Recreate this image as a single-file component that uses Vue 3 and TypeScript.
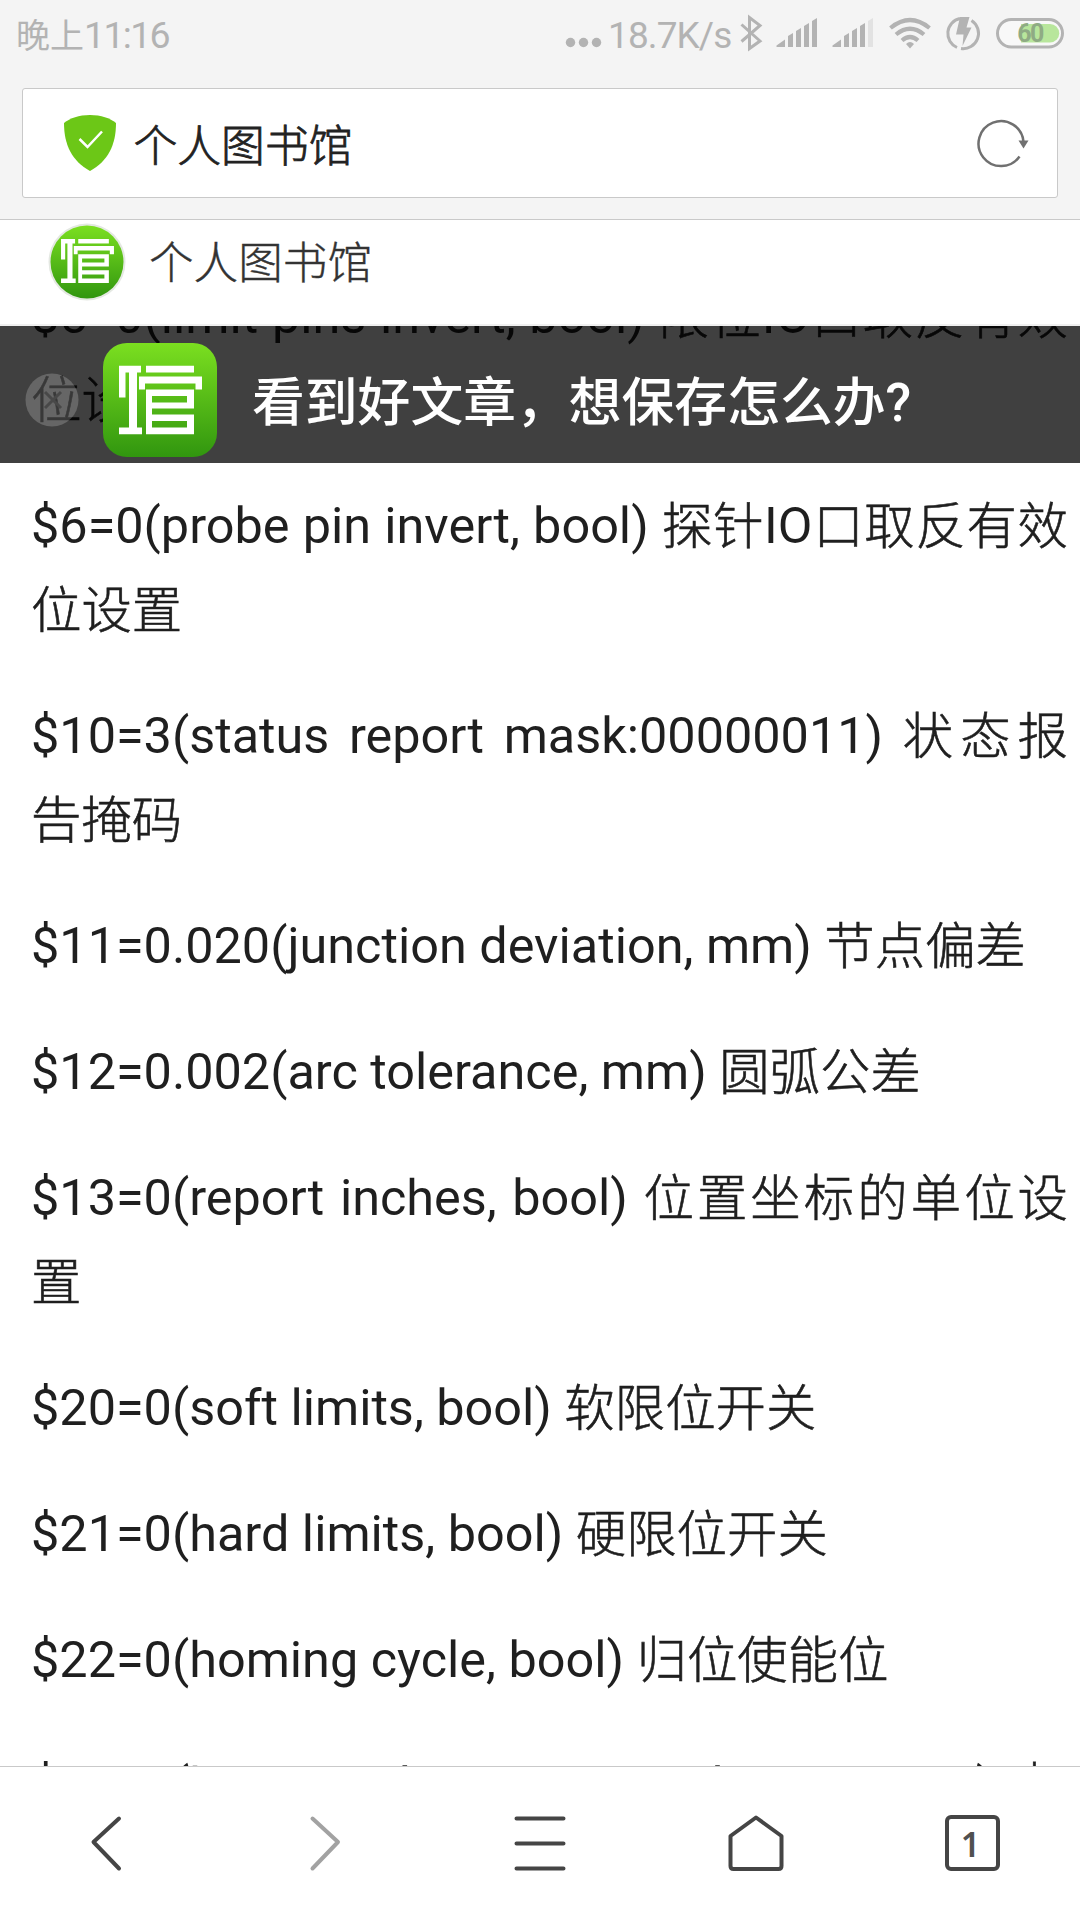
<script setup lang="ts">
interface Run {
  text: string
  han: boolean
}

const lines: string[] = [
  '$5=0(limit pins invert, bool) 限位IO口取反有效位设置',
  '$6=0(probe pin invert, bool) 探针IO口取反有效位设置',
  '$10=3(status report mask:00000011) 状态报告掩码',
  '$11=0.020(junction deviation, mm) 节点偏差',
  '$12=0.002(arc tolerance, mm) 圆弧公差',
  '$13=0(report inches, bool) 位置坐标的单位设置',
  '$20=0(soft limits, bool) 软限位开关',
  '$21=0(hard limits, bool) 硬限位开关',
  '$22=0(homing cycle, bool) 归位使能位',
  '$23=0(homing dir invert mask:00000000) 归位方向',
]

// Han characters are set in a lighter weight than the Latin text around them.
const paragraphs: Run[][] = lines.map((line) =>
  line
    .split(/([\u4e00-\u9fff]+)/)
    .filter((text) => text.length > 0)
    .map((text) => ({ text, han: /[\u4e00-\u9fff]/.test(text) })),
)
</script>

<template>
  <div class="screen">
    <header class="top">
      <div class="status">
        <span class="clock"><span class="clock-part">晚上</span>11:16</span>
        <span class="speed">18.7K/s</span>
        <svg class="status-icons" width="1080" height="70" viewBox="0 0 1080 70">
          <g fill="#b3b3b3">
            <circle cx="570.5" cy="42.5" r="4.7" />
            <circle cx="583.5" cy="42.5" r="4.7" />
            <circle cx="596.5" cy="42.5" r="4.7" />
            <path d="M776.500 47V45.500L785 39.500V47ZM788 36L793 33V47H788ZM796 31L801 28V47H796ZM804 26L809 23V47H804ZM812 21L817 18V47H812Z" />
            <path d="M832.500 47V45.500L841 39.500V47ZM844 36L849 33V47H844ZM852 31L857 28V47H852ZM860 26L865 23V47H860Z" />
            <path d="M868 21L873 18V47H868Z" fill="#e2e2e2" />
            <path d="M910 48.500L906 44Q910 40 914 44Z" />
            <path d="M960 17H969.500L966.500 27.500H971.500L962.500 46L963.500 34.500H956Z" />
          </g>
          <g fill="none" stroke="#b3b3b3" stroke-width="3">
            <path d="M741.500 24.500L760 41L749.500 48.500V17.500L760 25.500L741.500 41.500" />
            <path d="M890.500 28Q910 12 929.500 28M896 34.500Q910 23 924 34.500M902 40.500Q910 33.500 918 40.500" stroke-width="4.200" />
            <path d="M957 47.500A15.300 15.300 0 0 1 960 18.500M971.500 20.500A15.300 15.300 0 0 1 961 48.500" />
          </g>
          <rect x="997.500" y="19.500" width="65" height="27.500" rx="13.700" fill="#f8f8f8" stroke="#b3b3b3" stroke-width="3" />
          <path d="M1021 24H1050A9.200 9.200 0 0 1 1050 42.500H1021Z" fill="#b8e69c" />
        </svg>
        <span class="battery">60</span>
      </div>
      <div class="address">
        <svg class="shield" width="52" height="56" viewBox="0 0 52 56">
          <path d="M26 0C37 0 46 3 52 8C52 30 44 46 26 56C8 46 0 30 0 8C6 3 15 0 26 0Z" fill="#6cc717" />
          <path d="M15.500 24L23.500 32L38 16.500" fill="none" stroke="#fff" stroke-width="2.500" />
        </svg>
        <span class="address-title">个人图书馆</span>
        <svg class="reload" width="56" height="56" viewBox="0 0 56 56">
          <path d="M46.500 40.500A22.500 22.500 0 1 1 50.500 26" fill="none" stroke="#707070" stroke-width="2.500" />
          <path d="M45.500 24.500H55.500L50.500 32.500Z" fill="#707070" />
        </svg>
      </div>
    </header>

    <svg width="0" height="0" class="defs">
      <defs>
        <linearGradient id="green" x1="0" y1="0" x2="0" y2="1">
          <stop offset="0" stop-color="#7bdf20" />
          <stop offset="1" stop-color="#31960f" />
        </linearGradient>
        <symbol id="mark" viewBox="0 0 83 69">
          <g fill="#fff" fill-rule="evenodd">
            <path d="M0 0H22V7H18V62H23V69H0V62H10V7H6.500V32H0Z" />
            <path d="M27 0H75V7H27Z" />
            <path d="M20 11H83V24H76.500V18H26V24H20Z" />
            <path d="M27 24H75V43H33V49H75V69H27ZM33 30.500V37H68V30.500ZM33 55.500V62H68V55.500Z" />
          </g>
        </symbol>
      </defs>
    </svg>

    <div class="site">
      <svg class="site-logo" width="78" height="78" viewBox="0 0 78 78">
        <circle cx="39" cy="39" r="38.500" fill="#e4e8e2" />
        <circle cx="39" cy="39" r="36.500" fill="url(#green)" />
        <use href="#mark" x="13" y="16" width="53" height="44" />
      </svg>
      <span class="site-title">个人图书馆</span>
    </div>

    <main class="article">
      <div class="banner">
        <svg class="close" width="54" height="54" viewBox="0 0 54 54">
          <circle cx="27" cy="27" r="26.500" fill="#fff" fill-opacity="0.200" />
          <path d="M20 19L36 35M36 19L20 35" stroke="#484848" stroke-width="3" />
        </svg>
        <svg class="app-logo" width="114" height="114" viewBox="0 0 114 114">
          <rect width="114" height="114" rx="24" fill="url(#green)" />
          <use href="#mark" x="16" y="22.500" width="83" height="69" />
        </svg>
        <span class="slogan">看到好文章，想保存怎么办?</span>
      </div>
      <div class="copy">
        <p v-for="(runs, i) in paragraphs" :key="i"><span v-for="(run, j) in runs" :key="j" :class="{ han: run.han }">{{ run.text }}</span></p>
      </div>
    </main>

    <nav class="nav">
      <div class="nav-item">
        <svg width="60" height="60" viewBox="0 0 60 60">
          <path d="M41 5.500L15.500 29L41 55.500" stroke="#454545" />
        </svg>
      </div>
      <div class="nav-item">
        <svg width="60" height="60" viewBox="0 0 60 60">
          <path d="M18.500 5.500L44 29L18.500 55.500" stroke="#a2a2a2" />
        </svg>
      </div>
      <div class="nav-item">
        <svg width="60" height="60" viewBox="0 0 60 60">
          <path d="M6.500 5.500H53.500M6.500 30.500H53.500M6.500 55.500H53.500" stroke="#454545" />
        </svg>
      </div>
      <div class="nav-item">
        <svg width="60" height="60" viewBox="0 0 60 60">
          <path d="M30 4.500L55.500 23V53Q55.500 56 52.500 56H7.500Q4.500 56 4.500 53V23Z" stroke="#454545" />
        </svg>
      </div>
      <div class="nav-item"><span class="tabs">1</span></div>
    </nav>
  </div>
</template>

<style>
body {
  margin: 0;
}
</style>

<style scoped>
.screen {
  width: 1080px;
  height: 1920px;
  overflow: hidden;
  display: flex;
  flex-direction: column;
  background: #fff;
  color: #1f1f1f;
  font-family: Roboto, "Noto Sans CJK SC", sans-serif;
}
.top {
  box-sizing: border-box;
  height: 220px;
  flex: none;
  background: #f4f4f4;
  border-bottom: 1px solid #c9c9c9;
}
.status {
  position: relative;
  height: 88px;
  color: #b3b3b3;
}
.status-icons {
  position: absolute;
  left: 0;
  top: 0;
}
.clock {
  position: absolute;
  left: 16px;
  top: 10px;
  font-size: 37.5px;
  letter-spacing: -1.7px;
  line-height: 50px;
  white-space: nowrap;
}
.clock-part {
  font-size: 34px;
  letter-spacing: 0;
}
.speed {
  position: absolute;
  left: 608px;
  top: 11px;
  font-size: 37px;
  letter-spacing: -0.9px;
  line-height: 50px;
}
.battery {
  position: absolute;
  left: 1015px;
  width: 30px;
  top: 18px;
  font-size: 25px;
  font-weight: 700;
  letter-spacing: -1.5px;
  line-height: 31px;
  text-align: center;
  color: #8fab84;
}
.address {
  box-sizing: border-box;
  margin: 0 22px;
  height: 110px;
  border: 1px solid #c9c9c9;
  border-radius: 3px;
  background: #fff;
  display: flex;
  align-items: center;
  padding: 0 28px 0 41px;
}
.reload {
  margin-top: 1px;
}
.address-title {
  margin-left: 17.5px;
  padding-top: 7px;
  flex: 1;
  font-size: 43.8px;
  font-weight: 300;
  -webkit-text-stroke: 0.8px #222;
  line-height: 60px;
  color: #222;
}
.site {
  height: 106px;
  flex: none;
  box-sizing: border-box;
  display: flex;
  padding: 3px 0 0 48px;
  border-bottom: 2px solid #f0f0f0;
}
.site-title {
  margin-left: 23px;
  padding-top: 1.5px;
  font-size: 44.6px;
  font-weight: 300;
  -webkit-text-stroke: 0.4px #333;
  line-height: 78px;
  color: #333;
}
.defs {
  position: absolute;
}
.article {
  position: relative;
  flex: 1;
  min-height: 0;
  overflow: hidden;
}
.banner {
  position: absolute;
  z-index: 1;
  inset: 0 0 auto 0;
  height: 137px;
  box-sizing: border-box;
  background: rgba(0, 0, 0, 0.75);
  display: flex;
  align-items: center;
  padding: 11px 0 0 25px;
}
.app-logo {
  margin-left: 24px;
}
.slogan {
  margin: 0 0 5px 35px;
  color: #fff;
  font-size: 52.8px;
  font-weight: 500;
  white-space: nowrap;
}
.copy {
  margin-top: -52px;
  padding: 0 12px 0 31px;
}
.copy p {
  margin: 0 0 42px;
  font-size: 50.4px;
  line-height: 84px;
  text-align: justify;
}
.han {
  position: relative;
  top: 1px;
  font-weight: 300;
  -webkit-text-stroke: 0.6px #1f1f1f;
}
.nav {
  position: relative;
  height: 154px;
  box-sizing: border-box;
  flex: none;
  border-top: 1px solid #c9c9c9;
  background: #fff;
  display: flex;
  padding-bottom: 2px;
}
.nav-item {
  flex: 1;
  display: flex;
  justify-content: center;
  align-items: center;
}
.nav path {
  fill: none;
  stroke-width: 4;
  stroke-linecap: round;
  stroke-linejoin: round;
}
.tabs {
  box-sizing: border-box;
  width: 55px;
  height: 56px;
  border: 4px solid #454545;
  border-radius: 6px;
  padding-right: 3px;
  text-align: center;
  font-family: "Noto Sans", sans-serif;
  font-size: 34px;
  font-weight: 600;
  line-height: 50px;
  color: #505050;
}
</style>
